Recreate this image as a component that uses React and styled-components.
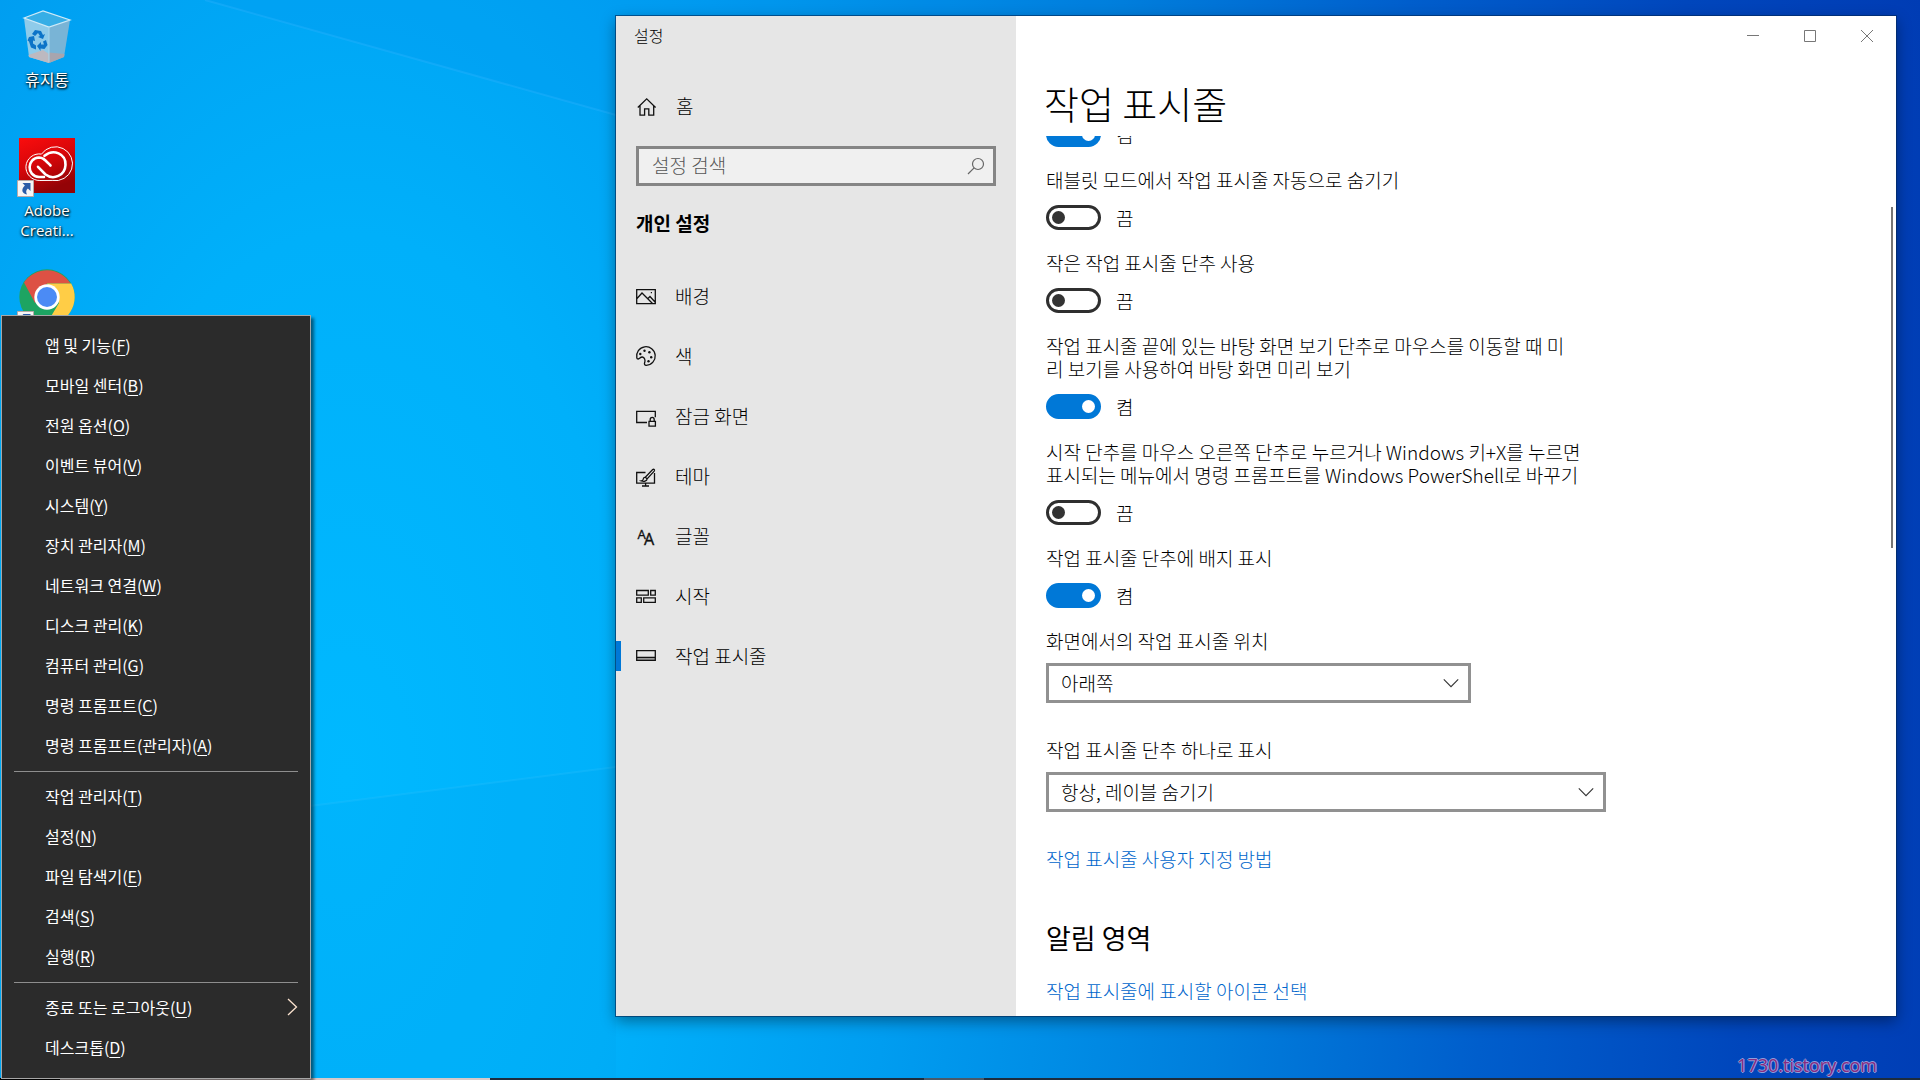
import React from 'react';
import styled, { createGlobalStyle } from 'styled-components';

const GlobalStyle = createGlobalStyle`
  * {
    box-sizing: border-box;
  }

  body {
    margin: 0;
    overflow: hidden;
    font-family: "Noto Sans CJK KR", "Noto Sans", sans-serif;
    color: #000;
  }

  button, input, select {
    font-family: inherit;
    font-weight: inherit;
    color: inherit;
  }
`;

/* ---------- desktop ---------- */

const Desktop = styled.div`
  position: relative;
  min-height: 100vh;
  overflow: hidden;
  background: radial-gradient(
    ellipse 85% 280% at 18% 72%,
    #00b9ff 0%,
    #00b0fa 18%,
    #009df0 34%,
    #007edc 54%,
    #005ecc 70%,
    #0046bc 86%,
    #003cb4 100%
  );
`;

const Beams = styled.svg`
  position: absolute;
  inset: 0;
  width: 100%;
  height: 100%;
`;

const IconGrid = styled.div`
  position: relative;
  display: grid;
  grid-auto-rows: 131px;
  width: 94px;
  padding-top: 7px;
`;

const DesktopIcon = styled.button`
  display: flex;
  flex-direction: column;
  align-items: center;
  gap: 6px;
  padding: 0;
  border: none;
  background: none;
  color: #fff;
  font-family: ${(props) => (props.$latin ? '"Open Sans", sans-serif' : 'inherit')};
  font-size: ${(props) => (props.$latin ? '15px' : '16px')};
  line-height: 20px;
  text-shadow: 1px 1px 2px #000, 0 1px 3px rgba(0, 0, 0, 0.8);
`;

const Strip = styled.div`
  position: absolute;
  left: 0;
  right: 0;
  bottom: 0;
  height: 2px;
  background: linear-gradient(
    to right,
    #000 60px,
    #d6c9c9 60px 490px,
    #1d2c3d 490px 924px,
    #4a5a6a 924px 984px,
    #1d2c3d 984px
  );
`;

const Watermark = styled.div`
  position: absolute;
  right: 43px;
  bottom: 3px;
  font-family: "Open Sans", sans-serif;
  font-size: 18px;
  line-height: 24px;
  color: #8a2a80;
  text-shadow: 1px 0 0 #8f9fdc, -1px 0 0 #8f9fdc, 0 1px 0 #8f9fdc, 0 -1px 0 #8f9fdc;
`;

/* ---------- context menu ---------- */

const Menu = styled.div`
  position: absolute;
  left: 1px;
  bottom: 1px;
  width: 310px;
  padding: 11px 0 9px;
  border: 1px solid #a6a6a6;
  background: #2b2b2b;
  box-shadow: 3px 3px 3px rgba(0, 0, 0, 0.5);
`;

const MenuItem = styled.button`
  display: flex;
  align-items: center;
  justify-content: space-between;
  width: 100%;
  height: 40px;
  padding: 0 12px 4px 43px;
  border: none;
  background: none;
  color: #fff;
  font-size: 16px;
  line-height: 24px;
  text-align: left;

  u {
    text-underline-offset: 3px;
    text-decoration-thickness: 1px;
  }
`;

const Separator = styled.hr`
  height: 1px;
  margin: 4px 12px 6px;
  border: none;
  background: #8e8e8e;
`;

/* ---------- settings window ---------- */

const Window = styled.section`
  position: absolute;
  top: 16px;
  right: 24px;
  bottom: 64px;
  left: 616px;
  display: grid;
  grid-template-columns: 400px 1fr;
  background: #fff;
  font-weight: 300;
  box-shadow: 0 0 0 1px rgba(0, 40, 90, 0.6), 0 5px 14px rgba(0, 0, 0, 0.4);
`;

const Sidebar = styled.aside`
  background: #e6e6e6;
`;

const WindowTitle = styled.div`
  height: 40px;
  padding-left: 18px;
  font-size: 16px;
  line-height: 38px;
`;

const HomeButton = styled.button`
  display: flex;
  align-items: center;
  gap: 20px;
  height: 40px;
  margin: 30px 0 20px;
  padding: 0 20px;
  border: none;
  background: none;
  font-size: 19px;
  line-height: 28px;
`;

const SearchBox = styled.label`
  display: flex;
  align-items: center;
  height: 40px;
  margin: 0 20px;
  padding: 0 8px 0 13px;
  border: 3px solid #858585;
  background: #f0f0f0;
`;

const SearchInput = styled.input`
  flex: 1;
  min-width: 0;
  padding: 0 0 4px;
  border: none;
  outline: none;
  background: none;
  font-size: 19px;

  &::placeholder {
    color: #555;
  }
`;

const SidebarHeading = styled.h2`
  margin: 23px 20px 29px;
  font-size: 19px;
  line-height: 28px;
  font-weight: 700;
`;

const NavItem = styled.a`
  position: relative;
  display: flex;
  align-items: center;
  gap: 19px;
  height: 60px;
  padding: 0 20px;
  color: inherit;
  font-size: 19px;
  line-height: 28px;
  text-decoration: none;

  &::before {
    content: '';
    display: ${(props) => (props.$active ? 'block' : 'none')};
    position: absolute;
    left: 0;
    width: 5px;
    height: 30px;
    background: #0078d7;
  }
`;

const Main = styled.main`
  display: flex;
  flex-direction: column;
  min-width: 0;
  min-height: 0;
`;

const Controls = styled.div`
  display: flex;
  justify-content: flex-end;
  padding-right: 1px;
`;

const ControlButton = styled.button`
  display: flex;
  align-items: center;
  justify-content: center;
  width: 57px;
  height: 40px;
  padding: 0;
  border: none;
  background: none;
`;

const PageTitle = styled.h1`
  margin: 23px 28px 9px;
  font-size: 38px;
  line-height: 48px;
  font-weight: 300;
`;

const ScrollArea = styled.div`
  position: relative;
  flex: 1;
  min-height: 0;
  overflow: hidden;
  padding-left: 30px;
`;

const ScrollThumb = styled.div`
  position: absolute;
  top: 71px;
  right: 3px;
  width: 2px;
  height: 341px;
  background: #767676;
`;

const Content = styled.div`
  max-width: 560px;
  margin-top: -14px;
  font-size: 19px;
  line-height: 23px;
`;

const Setting = styled.div`
  margin-bottom: 21px;
`;

const SettingLabel = styled.label`
  display: block;
  margin-bottom: ${(props) => props.$gap || 14}px;
  white-space: pre;
`;

const ToggleRow = styled.div`
  display: flex;
  align-items: center;
  gap: 15px;
  height: 25px;
`;

const ToggleInput = styled.input`
  appearance: none;
  display: flex;
  align-items: center;
  width: 55px;
  height: 25px;
  margin: 0;
  padding: 0 3px;
  border: 3px solid #2f2f2f;
  border-radius: 13px;
  background: #fff;

  &::before {
    content: '';
    width: 13px;
    height: 13px;
    border-radius: 50%;
    background: #333;
  }

  &:checked {
    justify-content: flex-end;
    border-color: #0078d7;
    background: #0078d7;
  }

  &:checked::before {
    background: #fff;
  }
`;

const SelectWrap = styled.div`
  position: relative;
  max-width: ${(props) => props.$width}px;
  margin-bottom: 35px;

  svg {
    position: absolute;
    top: 15px;
    right: 12px;
    pointer-events: none;
  }
`;

const Select = styled.select`
  appearance: none;
  display: block;
  width: 100%;
  height: 40px;
  padding: 0 32px 2px 12px;
  border: 3px solid #919191;
  border-radius: 0;
  background: #fff;
  font-size: 19px;
`;

const Link = styled.a`
  display: block;
  color: #0066cc;
  text-decoration: none;
`;

const SectionHeading = styled.h2`
  margin: 50px 0 23px;
  font-size: 27px;
  line-height: 36px;
  font-weight: 400;
`;

/* ---------- icons ---------- */

const LineIcon = ({ children }) => (
	<svg
		width='20'
		height='20'
		viewBox='0 0 20 20'
		fill='none'
		stroke='#111'
		strokeWidth='1.3'
		overflow='visible'
		aria-hidden='true'
	>
		{children}
	</svg>
);

const HomeIcon = () => (
	<LineIcon>
		<path d='M1.8 11.500 10.700 2.800 19.600 11.500M4 9.500v9.700h4.600v-6.400h4.200v6.400h4.900V9.500' />
	</LineIcon>
);

const PictureIcon = () => (
	<LineIcon>
		<path d='M.7 3.700h18.600v14H.7zM1 12.500l5-5.500 10.500 10.500M11.500 13l2.500-2.500 5 5.500' />
		<path d='M14.800 6h1.200v1.200h-1.200z' fill='#111' stroke='none' />
	</LineIcon>
);

const PaletteIcon = () => (
	<LineIcon>
		<path d='M.8 11.800A9.300 9.300 0 1 1 10.300 19.300C8.500 19.300 8.100 18 8.700 16.600 9.500 14.300 8.600 11.300 6.300 11 4.300 10.800 3.800 13 2.200 13 1.400 13 .9 12.500.8 11.800z' />
		<g fill='#111' stroke='none'>
			<circle cx='4.300' cy='8' r='1.200' />
			<circle cx='8.500' cy='4.700' r='1.200' />
			<circle cx='13.400' cy='6.300' r='1.200' />
			<circle cx='15.200' cy='11.200' r='1.200' />
			<circle cx='12.500' cy='15.200' r='1.200' />
		</g>
	</LineIcon>
);

const LockIcon = () => (
	<LineIcon>
		<path d='M11 16.500H.7V5.300h18.600v6' />
		<path d='M13 15.300h6.400v4.800H13zM14.200 15.100v-1.600a2 2.200 0 0 1 4 0v1.600' />
	</LineIcon>
);

const ThemeIcon = () => (
	<LineIcon>
		<path d='M9.500 6.500H.7v10.600h17.800V7M9.600 17.100v2.300M6 20h7' />
		<path d='M9.300 11.200 16.700 3.600c1.200-.9 2.300.3 1.500 1.500l-7.100 7.800zM9.300 11.200c-1.500 0-2 1-2.200 2.200-.2.900-.8 1.300-1.800 1.500 2.600.9 5.600.5 5.800-2z' />
	</LineIcon>
);

const FontIcon = () => (
	<LineIcon>
		<g fill='#111' stroke='#111' strokeWidth='.3' fontFamily='Noto Sans' fontWeight='400'>
			<text x='1.500' y='13' fontSize='13'>A</text>
			<text x='8' y='18.500' fontSize='16'>A</text>
		</g>
	</LineIcon>
);

const StartIcon = () => (
	<LineIcon>
		<path d='M.7 4.500h11.600v4.600H.7zM14.700 4.500h4.600v4.600h-4.600zM.7 11.800h4.600v4.600H.7zM7.700 11.800h11.600v4.600H7.700z' />
	</LineIcon>
);

const TaskbarIcon = () => (
	<LineIcon>
		<path d='M.7 11h18.600v3.300H.7z' fill='#999' stroke='none' />
		<path d='M.7 4.700h18.600v9.700H.7zM.7 11.300h18.600' />
	</LineIcon>
);

const SearchIcon = () => (
	<svg width='18' height='18' viewBox='0 0 18 18' fill='none' stroke='#666' strokeWidth='1.200' aria-hidden='true'>
		<circle cx='11' cy='7' r='5.500' />
		<path d='M7.100 10.900 1 17' />
	</svg>
);

const Chevron = () => (
	<svg width='16' height='10' viewBox='0 0 16 10' fill='none' stroke='#333' strokeWidth='1.100' aria-hidden='true'>
		<path d='M.8 1.300 8 8.700l7.200-7.400' />
	</svg>
);

const ShortcutBadge = () => (
	<>
		<path d='M-1.500 42.500h16v16h-16z' fill='#f6f6f6' stroke='#b8aaa8' />
		<path d='M3.500 45h8v8l-2.600-2.600C6.800 52 6.800 54 8 56.500 3 55.500 1.600 51.500 5.900 47.400z' fill='#2a5ca8' />
	</>
);

const RecycleBin = () => (
	<svg width='56' height='56' viewBox='0 0 56 56' aria-hidden='true'>
		<path d='M5 11 24 4l27 9-21 7z' fill='#37aee6' />
		<path d='M5 11 30 20v36L10 50z' fill='#8ecbea' />
		<path d='M51 13 30 20v36l15-6z' fill='#79b4d6' />
		<path d='M9.500 48 24 43l6 4v9l-20-6z' fill='#bdb9c0' />
		<path d='M30 45.500 45.500 47 45 50l-15 6z' fill='#a8a5ae' />
		<path d='M5 11 24 4l27 9-21 7z' fill='none' stroke='#cfeaf7' strokeWidth='1.200' />
		<path d='M30 20v35' stroke='#a9d6ec' />
		<g fill='#0c74c8'>
			<path d='m13 27 3-4 6 1 2 4 2-1-2 5-5-2 2-1-2-3-3 3z' />
			<path d='m10 30 5-1 1 5-2-.500 0 3 3 2v4l-5-2-2-6-1.500-1z' />
			<path d='m27 33 1.500 5-3 4-4-.500v2.500L18 39l4-4v2.500h3l-1-3z' />
		</g>
	</svg>
);

const CreativeCloud = () => (
	<svg width='56' height='56' viewBox='0 0 56 56' overflow='visible' aria-hidden='true'>
		<defs>
			<linearGradient id='cc' x1='0' y1='0' x2='.4' y2='1'>
				<stop offset='0' stopColor='#fa0d0d' />
				<stop offset='.5' stopColor='#d8060a' />
				<stop offset='1' stopColor='#940306' />
			</linearGradient>
		</defs>
		<path d='M0 0h56v55H0z' fill='url(#cc)' />
		<g fill='none' stroke='#fff' strokeLinecap='round'>
			<path d='M20.500 42.500a13.300 13.300 0 1 1 2-26.400 17 17 0 1 1 11 26.400z' strokeWidth='1' />
			<path d='M25 39h-5c-13-1-12-19 0-19.500 4 0 5.500 2 11.500 8' strokeWidth='2.600' />
			<path d='M25.500 17.800c9-7.500 21.500-2 21 9.200-.5 10.500-12 15.500-20 9.500L19 28.800' strokeWidth='2.600' />
		</g>
		<ShortcutBadge />
	</svg>
);

const Chrome = () => (
	<svg width='56' height='56' viewBox='0 0 56 56' overflow='visible' aria-hidden='true'>
		<circle cx='28' cy='28' r='27.700' fill='#1da462' />
		<path d='M5 13.500A27.700 27.700 0 0 1 51.500 14.500H28L16 34z' fill='#dd5144' />
		<path d='M28 14.500h24.200A27.700 27.700 0 0 1 27 55.700L40 34z' fill='#ffcd46' />
		<circle cx='28' cy='28' r='12.700' fill='#fff' />
		<circle cx='28' cy='28' r='10' fill='#4b8bf5' />
		<ShortcutBadge />
	</svg>
);

/* ---------- data ---------- */

const menuGroups = [
	[
		['앱 및 기능', 'F'],
		['모바일 센터', 'B'],
		['전원 옵션', 'O'],
		['이벤트 뷰어', 'V'],
		['시스템', 'Y'],
		['장치 관리자', 'M'],
		['네트워크 연결', 'W'],
		['디스크 관리', 'K'],
		['컴퓨터 관리', 'G'],
		['명령 프롬프트', 'C'],
		['명령 프롬프트(관리자)', 'A'],
	],
	[
		['작업 관리자', 'T'],
		['설정', 'N'],
		['파일 탐색기', 'E'],
		['검색', 'S'],
		['실행', 'R'],
	],
	[
		['종료 또는 로그아웃', 'U', true],
		['데스크톱', 'D'],
	],
];

const navItems = [
	{ text: '배경', icon: <PictureIcon /> },
	{ text: '색', icon: <PaletteIcon /> },
	{ text: '잠금 화면', icon: <LockIcon /> },
	{ text: '테마', icon: <ThemeIcon /> },
	{ text: '글꼴', icon: <FontIcon /> },
	{ text: '시작', icon: <StartIcon /> },
	{ text: '작업 표시줄', icon: <TaskbarIcon />, active: true },
];

// the first one is scrolled half out of view, its caption is above the fold
const toggles = [
	{ id: 'lock', on: true },
	{ id: 'tablet-hide', text: '태블릿 모드에서 작업 표시줄 자동으로 숨기기', on: false },
	{ id: 'small-buttons', text: '작은 작업 표시줄 단추 사용', on: false },
	{
		id: 'peek',
		text: '작업 표시줄 끝에 있는 바탕 화면 보기 단추로 마우스를 이동할 때 미\n리 보기를 사용하여 바탕 화면 미리 보기',
		on: true,
	},
	{
		id: 'powershell',
		text: '시작 단추를 마우스 오른쪽 단추로 누르거나 Windows 키+X를 누르면\n표시되는 메뉴에서 명령 프롬프트를 Windows PowerShell로 바꾸기',
		on: false,
	},
	{ id: 'badges', text: '작업 표시줄 단추에 배지 표시', on: true },
];

/* ---------- components ---------- */

const ContextMenu = () => (
	<Menu>
		{menuGroups.map((group, index) => (
			<React.Fragment key={index}>
				{index > 0 && <Separator />}
				{group.map(([text, accessKey, hasSubmenu]) => (
					<MenuItem key={accessKey}>
						<span>
							{text}(<u>{accessKey}</u>)
						</span>
						{hasSubmenu && (
							<svg width='11' height='18' viewBox='0 0 11 18' fill='none' stroke='#fbe3cf' strokeWidth='1.300'>
								<path d='m1 1 8.500 8L1 17' />
							</svg>
						)}
					</MenuItem>
				))}
			</React.Fragment>
		))}
	</Menu>
);

const Toggle = ({ id, text, on }) => (
	<Setting>
		{text && <SettingLabel htmlFor={id}>{text}</SettingLabel>}
		<ToggleRow>
			<ToggleInput type='checkbox' id={id} defaultChecked={on} />
			<label htmlFor={id}>{on ? '켬' : '끔'}</label>
		</ToggleRow>
	</Setting>
);

const Dropdown = ({ id, text, value, width }) => (
	<>
		<SettingLabel htmlFor={id} $gap={11}>{text}</SettingLabel>
		<SelectWrap $width={width}>
			<Select id={id}>
				<option>{value}</option>
			</Select>
			<Chevron />
		</SelectWrap>
	</>
);

const SettingsWindow = () => (
	<Window>
		<Sidebar>
			<WindowTitle>설정</WindowTitle>
			<HomeButton>
				<HomeIcon />
				홈
			</HomeButton>
			<SearchBox>
				<SearchInput type='text' placeholder='설정 검색' aria-label='설정 검색' />
				<SearchIcon />
			</SearchBox>
			<SidebarHeading>개인 설정</SidebarHeading>
			<nav>
				{navItems.map((item) => (
					<NavItem key={item.text} href='#' $active={item.active}>
						{item.icon}
						{item.text}
					</NavItem>
				))}
			</nav>
		</Sidebar>
		<Main>
			<Controls>
				<ControlButton aria-label='최소화'>
					<svg width='12' height='12' viewBox='0 0 12 12' stroke='#777'>
						<path d='M0 5.500h12' />
					</svg>
				</ControlButton>
				<ControlButton aria-label='최대화'>
					<svg width='12' height='12' viewBox='0 0 12 12' fill='none' stroke='#777'>
						<path d='M.5.500h11v11H.5z' />
					</svg>
				</ControlButton>
				<ControlButton aria-label='닫기'>
					<svg width='12' height='12' viewBox='0 0 12 12' stroke='#777'>
						<path d='m0 0 12 12M12 0 0 12' />
					</svg>
				</ControlButton>
			</Controls>
			<PageTitle>작업 표시줄</PageTitle>
			<ScrollArea>
				<Content>
					{toggles.map((item) => (
						<Toggle key={item.id} {...item} />
					))}
					<Dropdown id='position' text='화면에서의 작업 표시줄 위치' value='아래쪽' width={425} />
					<Dropdown id='combine' text='작업 표시줄 단추 하나로 표시' value='항상, 레이블 숨기기' width={560} />
					<Link href='#'>작업 표시줄 사용자 지정 방법</Link>
					<SectionHeading>알림 영역</SectionHeading>
					<Link href='#'>작업 표시줄에 표시할 아이콘 선택</Link>
				</Content>
				<ScrollThumb />
			</ScrollArea>
		</Main>
	</Window>
);

export default function App() {
	return (
		<>
			<GlobalStyle />
			<Desktop>
				<Beams viewBox='0 0 1920 1080' preserveAspectRatio='none' aria-hidden='true'>
					<path d='M205 0 616 115 1100 250V0z' fill='#0070e0' opacity='.08' />
					<path d='M205 0 616 115' stroke='#2fb4ff' strokeWidth='2' opacity='.35' />
					<path d='M0 845 616 767V1080H0z' fill='#0090d8' opacity='.08' />
					<path d='M310 806 616 767' stroke='#3fc8ff' strokeWidth='2' opacity='.2' />
				</Beams>
				<IconGrid>
					<DesktopIcon>
						<RecycleBin />
						휴지통
					</DesktopIcon>
					<DesktopIcon $latin>
						<CreativeCloud />
						<span>
							Adobe
							<br />
							Creati...
						</span>
					</DesktopIcon>
					<DesktopIcon aria-label='Chrome'>
						<Chrome />
					</DesktopIcon>
				</IconGrid>
				<SettingsWindow />
				<Watermark>1730.tistory.com</Watermark>
				<Strip />
				<ContextMenu />
			</Desktop>
		</>
	);
}
